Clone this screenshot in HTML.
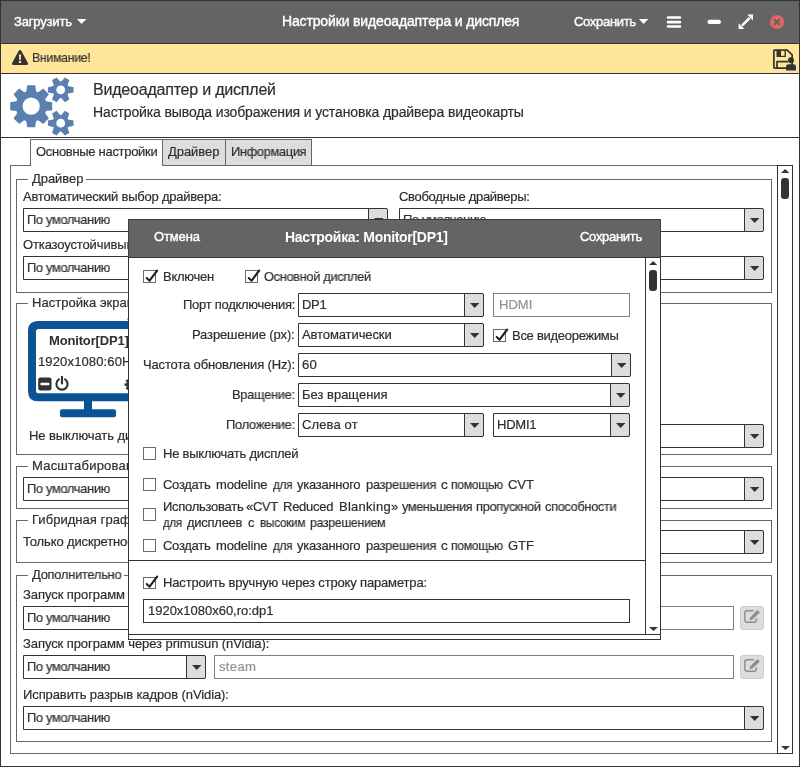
<!DOCTYPE html>
<html lang="ru"><head><meta charset="utf-8"><title>Настройки видеоадаптера и дисплея</title>
<style>
html,body{margin:0;padding:0;}
body{width:800px;height:767px;position:relative;overflow:hidden;background:#fff;font-family:"Liberation Sans", sans-serif;}
body>div,body>svg,body>span{position:absolute;display:block;}
span{will-change:transform;white-space:pre;line-height:20px;height:20px;transform-origin:0 50%;-webkit-text-stroke:0.2px;}
</style></head>
<body>
<div style="left:0px;top:0px;width:800px;height:767px;background:#fff;"></div>
<div style="left:0px;top:0px;width:800px;height:43px;background:#646464;"></div>
<div style="left:0px;top:43px;width:800px;height:1px;background:#333;"></div>
<div style="left:0px;top:44px;width:800px;height:29px;background:#ffe599;"></div>
<div style="left:0px;top:73px;width:800px;height:1px;background:#333;"></div>
<div style="left:0px;top:137px;width:800px;height:1px;background:#333;"></div>
<span style="left:14.1px;top:12px;font-size:13px;color:#fff;-webkit-text-stroke:0.4px;letter-spacing:-0.173px;">Загрузить</span>
<svg style="left:76.9px;top:19.1px;" width="9.2" height="5" viewBox="0 0 9.2 5"><path d="M0 0H9.2L4.6 5Z" fill="#fff"/></svg>
<span style="left:281.6px;top:11px;font-size:14px;color:#fff;-webkit-text-stroke:0.4px;letter-spacing:-0.148px;">Настройки видеоадаптера и дисплея</span>
<span style="left:573.7px;top:12px;font-size:13px;color:#fff;-webkit-text-stroke:0.4px;letter-spacing:-0.300px;transform:scaleX(0.9966);">Сохранить</span>
<svg style="left:639.0px;top:19.1px;" width="9.2" height="5" viewBox="0 0 9.2 5"><path d="M0 0H9.2L4.6 5Z" fill="#fff"/></svg>
<svg style="left:666px;top:14px;" width="16" height="16" viewBox="0 0 16 16"><g fill="#fff"><rect x="0.8" y="2.2" width="14.4" height="2.6" rx="1.2"/><rect x="0.8" y="6.8" width="14.4" height="2.6" rx="1.2"/><rect x="0.800" y="11.2" width="14.4" height="2.6" rx="1.2"/></g></svg>
<svg style="left:706px;top:18px;" width="16" height="8" viewBox="0 0 16 8"><rect x="1.5" y="1.7" width="13.5" height="4.300" rx="2.1" fill="#fff"/></svg>
<svg style="left:738px;top:14px;" width="16" height="16" viewBox="0 0 16 16"><g fill="#fff"><path d="M9.2 0.6H15V6.4Z"/><path d="M0.6 9.200V15H6.400Z"/></g><path d="M4 11.600L11.6 4" stroke="#fff" stroke-width="2.5"/></svg>
<svg style="left:769px;top:14px;" width="16" height="16" viewBox="0 0 16 16"><circle cx="8" cy="8" r="7.1" fill="#e06666"/><path d="M5.7 5.7L10.300 10.300M10.3 5.7L5.700 10.3" stroke="#646464" stroke-width="2.1" stroke-linecap="round"/></svg>
<svg style="left:11px;top:49px;" width="18" height="17" viewBox="0 0 18 17"><path d="M9 1Q9.9 1 10.4 1.9L16.9 13.9Q17.6 15.8 15.800 15.9H2.200Q0.4 15.8 1.1 13.900L7.6 1.9Q8.100 1 9 1Z" fill="#333"/><path d="M7.9 5.4H10.1L9.800 10.9H8.2Z" fill="#ffe599"/><rect x="7.9" y="11.9" width="2.2" height="2.1" fill="#ffe599"/></svg>
<span style="left:32.1px;top:48px;font-size:13px;color:#333;letter-spacing:-0.300px;transform:scaleX(0.9456);">Внимание!</span>
<svg style="left:772px;top:48px;" width="26" height="24" viewBox="0 0 26 24"><g fill="none" stroke="#333" stroke-width="1.7" stroke-linejoin="round">
<path d="M1.85 3.2Q1.85 2.15 2.9 2.15H15.200L20.15 6.9V19.1Q20.15 20.15 19.1 20.15H2.9Q1.85 20.15 1.85 19.1Z"/>
<path d="M5 20.15V13.700H16"/>
</g>
<path d="M4.5 2.15H13.9V9H4.500Z" fill="#333"/><rect x="9" y="2.9" width="3.5" height="4.9" fill="#ffe599"/>
<circle cx="19" cy="12.300" r="3" fill="#333"/>
<path d="M14 22.5V18.8Q14 16.3 16.500 16.3H21.500Q24 16.3 24 18.8V22.500Z" fill="#333"/></svg>
<svg style="left:0px;top:74px;" width="90" height="63" viewBox="0 74 90 63"><path d="M46.01 101.30L52.20 102.20L52.20 110.20L46.01 111.10A15.60 15.60 0 0 1 45.14 113.21L48.88 118.22L43.22 123.88L38.21 120.14A15.60 15.60 0 0 1 36.10 121.01L35.20 127.20L27.20 127.20L26.30 121.01A15.60 15.60 0 0 1 24.19 120.14L19.18 123.88L13.52 118.22L17.26 113.21A15.60 15.60 0 0 1 16.39 111.10L10.20 110.20L10.20 102.20L16.39 101.30A15.60 15.60 0 0 1 17.26 99.19L13.52 94.18L19.18 88.52L24.19 92.26A15.60 15.60 0 0 1 26.30 91.39L27.20 85.20L35.20 85.20L36.10 91.39A15.60 15.60 0 0 1 38.21 92.26L43.22 88.52L48.88 94.18L45.14 99.19A15.60 15.60 0 0 1 46.01 101.30ZM39.80 106.20A8.6 8.6 0 1 0 22.60 106.20A8.6 8.6 0 1 0 39.80 106.20ZM68.13 86.10L73.50 87.20L73.50 92.40L68.13 93.50A8.30 8.30 0 0 1 67.62 94.38L69.35 99.59L64.85 102.19L61.21 98.08A8.30 8.30 0 0 1 60.19 98.08L56.55 102.19L52.05 99.59L53.78 94.38A8.30 8.30 0 0 1 53.27 93.50L47.90 92.40L47.90 87.20L53.27 86.10A8.30 8.30 0 0 1 53.78 85.22L52.05 80.01L56.55 77.41L60.19 81.52A8.30 8.30 0 0 1 61.21 81.52L64.85 77.41L69.35 80.01L67.62 85.22A8.30 8.30 0 0 1 68.13 86.10ZM65.10 89.80A4.4 4.4 0 1 0 56.30 89.80A4.4 4.4 0 1 0 65.10 89.80ZM68.13 119.50L73.50 120.60L73.50 125.80L68.13 126.90A8.30 8.30 0 0 1 67.62 127.78L69.35 132.99L64.85 135.59L61.21 131.48A8.30 8.30 0 0 1 60.19 131.48L56.55 135.59L52.05 132.99L53.78 127.78A8.30 8.30 0 0 1 53.27 126.90L47.90 125.80L47.90 120.60L53.27 119.50A8.30 8.30 0 0 1 53.78 118.62L52.05 113.41L56.55 110.81L60.19 114.92A8.30 8.30 0 0 1 61.21 114.92L64.85 110.81L69.35 113.41L67.62 118.62A8.30 8.30 0 0 1 68.13 119.50ZM65.10 123.20A4.4 4.4 0 1 0 56.30 123.20A4.4 4.4 0 1 0 65.10 123.20Z" fill="#5b80b0" fill-rule="evenodd"/></svg>
<span style="left:93.1px;top:80px;font-size:16px;color:#2e2e2e;letter-spacing:-0.210px;">Видеоадаптер и дисплей</span>
<span style="left:93.1px;top:102px;font-size:14px;color:#2e2e2e;letter-spacing:-0.128px;">Настройка вывода изображения и установка драйвера видеокарты</span>
<div style="left:162px;top:139px;width:64px;height:27px;background:#ddd;border:1px solid #666;box-sizing:border-box;"></div>
<div style="left:225px;top:139px;width:87px;height:27px;background:#ddd;border:1px solid #666;box-sizing:border-box;"></div>
<div style="left:10px;top:165px;width:783px;height:589px;background:#fff;border:1px solid #666;box-sizing:border-box;"></div>
<div style="left:30px;top:139px;width:133px;height:27px;background:#fff;border:1px solid #666;box-sizing:border-box;border-bottom:none;"></div>
<span style="left:35.7px;top:142px;font-size:13px;color:#2e2e2e;letter-spacing:-0.300px;">Основные настройки</span>
<span style="left:168.1px;top:142px;font-size:13px;color:#2e2e2e;letter-spacing:-0.050px;">Драйвер</span>
<span style="left:230.6px;top:142px;font-size:13px;color:#2e2e2e;letter-spacing:-0.300px;transform:scaleX(0.9831);">Информация</span>
<div style="left:777px;top:165px;width:1px;height:589px;background:#333;"></div>
<div style="left:792px;top:165px;width:1px;height:589px;background:#333;"></div>
<div style="left:777px;top:165px;width:16px;height:1px;background:#333;"></div>
<div style="left:777px;top:753px;width:16px;height:1px;background:#333;"></div>
<svg style="left:780.8px;top:169.0px;" width="8.4" height="4" viewBox="0 0 8.4 4"><path d="M0 4H8.4L4.2 0Z" fill="#333"/></svg>
<div style="left:781px;top:178px;width:8px;height:21px;background:#333;border-radius:3.2px;"></div>
<svg style="left:780.5px;top:745.5px;" width="9" height="4" viewBox="0 0 9 4"><path d="M0 0H9L4.5 4Z" fill="#333"/></svg>
<div style="left:16px;top:179px;width:756px;height:114px;border:1px solid #666;box-sizing:border-box;"></div>
<div style="left:28px;top:177px;width:58px;height:5px;background:#fff;"></div>
<span style="left:31.6px;top:169px;font-size:13px;color:#2e2e2e;letter-spacing:-0.064px;">Драйвер</span>
<span style="left:22.6px;top:187px;font-size:13px;color:#2e2e2e;letter-spacing:-0.220px;">Автоматический выбор драйвера:</span>
<div style="left:23px;top:208px;width:365px;height:24px;background:#fff;border:1px solid #333;box-sizing:border-box;border-radius:0 2px 2px 0;"></div>
<div style="left:368px;top:208px;width:20px;height:24px;background:#ddd;border:1px solid #333;box-sizing:border-box;border-radius:0 2px 2px 0;"></div>
<svg style="left:373.7px;top:218.0px;" width="9.4" height="5" viewBox="0 0 9.4 5"><path d="M0 0H9.4L4.7 5Z" fill="#333"/></svg>
<span style="left:26.5px;top:210px;font-size:13px;color:#2e2e2e;letter-spacing:-0.300px;transform:scaleX(0.9855);">По умолчанию</span>
<span style="left:398.6px;top:187px;font-size:13px;color:#2e2e2e;letter-spacing:-0.300px;">Свободные драйверы:</span>
<div style="left:399px;top:208px;width:365px;height:24px;background:#fff;border:1px solid #333;box-sizing:border-box;border-radius:0 2px 2px 0;"></div>
<div style="left:744px;top:208px;width:20px;height:24px;background:#ddd;border:1px solid #333;box-sizing:border-box;border-radius:0 2px 2px 0;"></div>
<svg style="left:749.6999999999999px;top:218.0px;" width="9.4" height="5" viewBox="0 0 9.4 5"><path d="M0 0H9.4L4.7 5Z" fill="#333"/></svg>
<span style="left:402.5px;top:210px;font-size:13px;color:#2e2e2e;letter-spacing:-0.300px;transform:scaleX(0.9855);">По умолчанию</span>
<span style="left:22.6px;top:235px;font-size:13px;color:#2e2e2e;letter-spacing:-0.131px;">Отказоустойчивый выбор драйвера:</span>
<div style="left:23px;top:256px;width:365px;height:24px;background:#fff;border:1px solid #333;box-sizing:border-box;border-radius:0 2px 2px 0;"></div>
<div style="left:368px;top:256px;width:20px;height:24px;background:#ddd;border:1px solid #333;box-sizing:border-box;border-radius:0 2px 2px 0;"></div>
<svg style="left:373.7px;top:266.0px;" width="9.4" height="5" viewBox="0 0 9.4 5"><path d="M0 0H9.4L4.7 5Z" fill="#333"/></svg>
<span style="left:26.5px;top:258px;font-size:13px;color:#2e2e2e;letter-spacing:-0.300px;transform:scaleX(0.9855);">По умолчанию</span>
<div style="left:399px;top:256px;width:365px;height:24px;background:#fff;border:1px solid #333;box-sizing:border-box;border-radius:0 2px 2px 0;"></div>
<div style="left:744px;top:256px;width:20px;height:24px;background:#ddd;border:1px solid #333;box-sizing:border-box;border-radius:0 2px 2px 0;"></div>
<svg style="left:749.6999999999999px;top:266.0px;" width="9.4" height="5" viewBox="0 0 9.4 5"><path d="M0 0H9.4L4.7 5Z" fill="#333"/></svg>
<span style="left:402.5px;top:258px;font-size:13px;color:#2e2e2e;letter-spacing:-0.300px;transform:scaleX(0.9855);">По умолчанию</span>
<div style="left:16px;top:303px;width:756px;height:152px;border:1px solid #666;box-sizing:border-box;"></div>
<div style="left:28px;top:301px;width:116px;height:5px;background:#fff;"></div>
<span style="left:31.6px;top:293px;font-size:13px;color:#2e2e2e;letter-spacing:0.030px;">Настройка экрана</span>
<svg style="left:28px;top:320.8px;" width="121" height="97" viewBox="0 0 121 97"><path d="M10 0H110Q120 0 120 10V70.200Q120 80.2 110 80.2H10Q0 80.2 0 70.2V10Q0 0 10 0ZM10.5 8Q8 8 8 10.5V69.700Q8 72.2 10.5 72.2H109.5Q112 72.2 112 69.7V10.5Q112 8 109.500 8Z" fill="#0b5394" fill-rule="evenodd"/><rect x="56" y="79" width="8" height="10" fill="#0b5394"/><rect x="32" y="88.2" width="56" height="8" rx="2" fill="#0b5394"/></svg>
<span style="left:48.8px;top:331px;font-size:13px;color:#2e2e2e;font-weight:bold;-webkit-text-stroke:0;letter-spacing:-0.159px;">Monitor[DP1]</span>
<span style="left:37.6px;top:352px;font-size:13px;color:#2e2e2e;letter-spacing:0.142px;">1920x1080:60Hz</span>
<svg style="left:38px;top:377px;" width="14" height="14" viewBox="0 0 14 14"><rect x="0.2" y="0.4" width="13.3" height="13" rx="2.2" fill="#333"/><rect x="2.4" y="5.8" width="9" height="2.4" rx="0.6" fill="#fff"/></svg>
<svg style="left:54px;top:375px;" width="16" height="17" viewBox="0 0 16 17"><path d="M4.9 4.4A5.6 5.6 0 1 0 11.100 4.4" fill="none" stroke="#333" stroke-width="2.1" stroke-linecap="round"/><path d="M8 1.900V8.4" stroke="#333" stroke-width="2.1" stroke-linecap="round"/></svg>
<svg style="left:124px;top:378px;" width="14" height="14" viewBox="0 0 14 14"><path d="M11.28 5.20L13.30 5.50L13.30 7.70L11.28 8.00A4.60 4.60 0 0 1 10.99 8.71L12.20 10.35L10.65 11.90L9.01 10.69A4.60 4.60 0 0 1 8.30 10.98L8.00 13.00L5.80 13.00L5.50 10.98A4.60 4.60 0 0 1 4.79 10.69L3.15 11.90L1.60 10.35L2.81 8.71A4.60 4.60 0 0 1 2.52 8.00L0.50 7.70L0.50 5.50L2.52 5.20A4.60 4.60 0 0 1 2.81 4.49L1.60 2.85L3.15 1.30L4.79 2.51A4.60 4.60 0 0 1 5.50 2.22L5.80 0.20L8.00 0.20L8.30 2.22A4.60 4.60 0 0 1 9.01 2.51L10.65 1.30L12.20 2.85L10.99 4.49A4.60 4.60 0 0 1 11.28 5.20ZM8.90 6.60A2 2 0 1 0 4.90 6.60A2 2 0 1 0 8.90 6.60Z" fill="#333" fill-rule="evenodd"/></svg>
<div style="left:127px;top:318px;width:2px;height:2px;background:#f5a623;"></div>
<span style="left:28.9px;top:426px;font-size:13px;color:#2e2e2e;letter-spacing:-0.071px;">Не выключать дисплей:</span>
<div style="left:180px;top:424px;width:584px;height:24px;background:#fff;border:1px solid #333;box-sizing:border-box;border-radius:0 2px 2px 0;"></div>
<div style="left:744px;top:424px;width:20px;height:24px;background:#ddd;border:1px solid #333;box-sizing:border-box;border-radius:0 2px 2px 0;"></div>
<svg style="left:749.6999999999999px;top:434.0px;" width="9.4" height="5" viewBox="0 0 9.4 5"><path d="M0 0H9.4L4.7 5Z" fill="#333"/></svg>
<span style="left:183.5px;top:426px;font-size:13px;color:#2e2e2e;letter-spacing:-0.300px;transform:scaleX(0.9855);">По умолчанию</span>
<div style="left:16px;top:466px;width:756px;height:43px;border:1px solid #666;box-sizing:border-box;"></div>
<div style="left:28px;top:464px;width:123px;height:5px;background:#fff;"></div>
<span style="left:31.6px;top:456px;font-size:13px;color:#2e2e2e;letter-spacing:0.219px;">Масштабирование</span>
<div style="left:23px;top:477px;width:741px;height:24px;background:#fff;border:1px solid #333;box-sizing:border-box;border-radius:0 2px 2px 0;"></div>
<div style="left:744px;top:477px;width:20px;height:24px;background:#ddd;border:1px solid #333;box-sizing:border-box;border-radius:0 2px 2px 0;"></div>
<svg style="left:749.6999999999999px;top:487.0px;" width="9.4" height="5" viewBox="0 0 9.4 5"><path d="M0 0H9.4L4.7 5Z" fill="#333"/></svg>
<span style="left:26.5px;top:479px;font-size:13px;color:#2e2e2e;letter-spacing:-0.300px;transform:scaleX(0.9855);">По умолчанию</span>
<div style="left:16px;top:520px;width:756px;height:43px;border:1px solid #666;box-sizing:border-box;"></div>
<div style="left:28px;top:518px;width:126px;height:5px;background:#fff;"></div>
<span style="left:31.6px;top:510px;font-size:13px;color:#2e2e2e;letter-spacing:0.045px;">Гибридная графика</span>
<span style="left:22.6px;top:532px;font-size:13px;color:#2e2e2e;letter-spacing:-0.133px;">Только дискретное</span>
<div style="left:200px;top:530px;width:564px;height:24px;background:#fff;border:1px solid #333;box-sizing:border-box;border-radius:0 2px 2px 0;"></div>
<div style="left:744px;top:530px;width:20px;height:24px;background:#ddd;border:1px solid #333;box-sizing:border-box;border-radius:0 2px 2px 0;"></div>
<svg style="left:749.6999999999999px;top:540.0px;" width="9.4" height="5" viewBox="0 0 9.4 5"><path d="M0 0H9.4L4.7 5Z" fill="#333"/></svg>
<span style="left:203.5px;top:532px;font-size:13px;color:#2e2e2e;letter-spacing:-0.300px;transform:scaleX(0.9855);">По умолчанию</span>
<div style="left:16px;top:575px;width:756px;height:167px;border:1px solid #666;box-sizing:border-box;"></div>
<div style="left:28px;top:573px;width:96px;height:5px;background:#fff;"></div>
<span style="left:31.6px;top:565px;font-size:13px;color:#2e2e2e;letter-spacing:-0.300px;transform:scaleX(0.9958);">Дополнительно</span>
<span style="left:22.6px;top:585px;font-size:13px;color:#2e2e2e;letter-spacing:-0.063px;">Запуск программ через optirun (nVidia):</span>
<div style="left:23px;top:606px;width:183px;height:24px;background:#fff;border:1px solid #333;box-sizing:border-box;border-radius:0 2px 2px 0;"></div>
<div style="left:186px;top:606px;width:20px;height:24px;background:#ddd;border:1px solid #333;box-sizing:border-box;border-radius:0 2px 2px 0;"></div>
<svg style="left:191.70000000000002px;top:616.0px;" width="9.4" height="5" viewBox="0 0 9.4 5"><path d="M0 0H9.4L4.7 5Z" fill="#333"/></svg>
<span style="left:26.5px;top:608px;font-size:13px;color:#2e2e2e;letter-spacing:-0.300px;transform:scaleX(0.9855);">По умолчанию</span>
<div style="left:214px;top:606px;width:520px;height:24px;background:#fff;border:1px solid #7d7d8c;box-sizing:border-box;"></div>
<div style="left:740px;top:606px;width:24px;height:24px;background:#ddd;border:1px solid #ccc;box-sizing:border-box;border-radius:3px;"></div>
<span style="left:22.6px;top:634px;font-size:13px;color:#2e2e2e;letter-spacing:-0.079px;">Запуск программ через primusun (nVidia):</span>
<div style="left:23px;top:655px;width:183px;height:24px;background:#fff;border:1px solid #333;box-sizing:border-box;border-radius:0 2px 2px 0;"></div>
<div style="left:186px;top:655px;width:20px;height:24px;background:#ddd;border:1px solid #333;box-sizing:border-box;border-radius:0 2px 2px 0;"></div>
<svg style="left:191.70000000000002px;top:665.0px;" width="9.4" height="5" viewBox="0 0 9.4 5"><path d="M0 0H9.4L4.7 5Z" fill="#333"/></svg>
<span style="left:26.5px;top:657px;font-size:13px;color:#2e2e2e;letter-spacing:-0.300px;transform:scaleX(0.9855);">По умолчанию</span>
<div style="left:214px;top:655px;width:520px;height:24px;background:#fff;border:1px solid #7d7d8c;box-sizing:border-box;"></div>
<span style="left:219.1px;top:657px;font-size:13px;color:#90909a;letter-spacing:0.300px;transform:scaleX(1.0107);">steam</span>
<div style="left:740px;top:655px;width:24px;height:24px;background:#ddd;border:1px solid #ccc;box-sizing:border-box;border-radius:3px;"></div>
<svg style="left:743px;top:609px;" width="18" height="16" viewBox="0 0 18 16"><g fill="none" stroke="#8e8e8e" stroke-width="1.4" stroke-linecap="round" stroke-linejoin="round"><path d="M10.2 1.8H4.200Q1.8 1.8 1.8 4.2V10.8Q1.8 13.2 4.2 13.2H11Q13.4 13.2 13.4 10.800V9.6"/></g><path d="M7.2 8.200L14.4 1L16.8 3.4L9.6 10.600L6.6 11.200Z" fill="#8e8e8e"/><path d="M8.6 8.300L9.5 9.200" stroke="#ddd" stroke-width="0.8"/></svg>
<svg style="left:743px;top:658px;" width="18" height="16" viewBox="0 0 18 16"><g fill="none" stroke="#8e8e8e" stroke-width="1.4" stroke-linecap="round" stroke-linejoin="round"><path d="M10.2 1.8H4.200Q1.8 1.8 1.8 4.2V10.8Q1.8 13.2 4.2 13.2H11Q13.4 13.2 13.4 10.800V9.6"/></g><path d="M7.2 8.200L14.4 1L16.8 3.4L9.6 10.600L6.6 11.200Z" fill="#8e8e8e"/><path d="M8.6 8.300L9.5 9.200" stroke="#ddd" stroke-width="0.8"/></svg>
<span style="left:22.6px;top:685px;font-size:13px;color:#2e2e2e;letter-spacing:-0.102px;">Исправить разрыв кадров (nVidia):</span>
<div style="left:23px;top:706px;width:741px;height:24px;background:#fff;border:1px solid #333;box-sizing:border-box;border-radius:0 2px 2px 0;"></div>
<div style="left:744px;top:706px;width:20px;height:24px;background:#ddd;border:1px solid #333;box-sizing:border-box;border-radius:0 2px 2px 0;"></div>
<svg style="left:749.6999999999999px;top:716.0px;" width="9.4" height="5" viewBox="0 0 9.4 5"><path d="M0 0H9.4L4.7 5Z" fill="#333"/></svg>
<span style="left:26.5px;top:708px;font-size:13px;color:#2e2e2e;letter-spacing:-0.300px;transform:scaleX(0.9855);">По умолчанию</span>
<div style="left:128px;top:219px;width:533px;height:421px;background:#fff;border:1px solid #333;box-sizing:border-box;"></div>
<div style="left:128px;top:219px;width:533px;height:39px;background:#646464;border:1px solid #3c3c3c;box-sizing:border-box;"></div>
<div style="left:128px;top:257px;width:533px;height:1px;background:#333;"></div>
<span style="left:154.1px;top:227px;font-size:13px;color:#fff;-webkit-text-stroke:0.4px;letter-spacing:-0.143px;">Отмена</span>
<span style="left:284.6px;top:227px;font-size:14px;color:#fff;font-weight:bold;-webkit-text-stroke:0;letter-spacing:-0.300px;">Настройка: Monitor[DP1]</span>
<span style="left:579.9px;top:227px;font-size:13px;color:#fff;-webkit-text-stroke:0.4px;letter-spacing:-0.290px;">Сохранить</span>
<div style="left:645px;top:258px;width:1px;height:377px;background:#333;"></div>
<div style="left:129px;top:634px;width:532px;height:1px;background:#333;"></div>
<svg style="left:648.8px;top:261.0px;" width="8.4" height="4" viewBox="0 0 8.4 4"><path d="M0 4H8.4L4.2 0Z" fill="#333"/></svg>
<div style="left:649px;top:270px;width:8px;height:21px;background:#333;border-radius:3.2px;"></div>
<svg style="left:648.5px;top:627.0px;" width="9" height="4" viewBox="0 0 9 4"><path d="M0 0H9L4.5 4Z" fill="#333"/></svg>
<div style="left:143px;top:270px;width:13px;height:13px;background:#fff;border:1px solid #6a6a6a;box-sizing:border-box;"></div>
<svg style="left:143px;top:268.0px;" width="17" height="16" viewBox="0 0 17 16"><path d="M3.7 10L6.600 12.7L14.200 2.5" fill="none" stroke="#222" stroke-width="2.1" stroke-linecap="round" stroke-linejoin="round"/></svg>
<span style="left:163.0px;top:267px;font-size:13px;color:#2e2e2e;letter-spacing:-0.264px;">Включен</span>
<div style="left:245px;top:270px;width:13px;height:13px;background:#fff;border:1px solid #6a6a6a;box-sizing:border-box;"></div>
<svg style="left:245px;top:268.0px;" width="17" height="16" viewBox="0 0 17 16"><path d="M3.7 10L6.600 12.7L14.200 2.5" fill="none" stroke="#222" stroke-width="2.1" stroke-linecap="round" stroke-linejoin="round"/></svg>
<span style="left:263.6px;top:267px;font-size:13px;color:#2e2e2e;letter-spacing:-0.300px;transform:scaleX(0.9808);">Основной дисплей</span>
<span style="left:182.9px;top:295px;font-size:13px;color:#2e2e2e;letter-spacing:-0.273px;">Порт подключения:</span>
<div style="left:298px;top:293px;width:186px;height:24px;background:#fff;border:1px solid #333;box-sizing:border-box;border-radius:0 2px 2px 0;"></div>
<div style="left:464px;top:293px;width:20px;height:24px;background:#ddd;border:1px solid #333;box-sizing:border-box;border-radius:0 2px 2px 0;"></div>
<svg style="left:469.7px;top:303.0px;" width="9.4" height="5" viewBox="0 0 9.4 5"><path d="M0 0H9.4L4.7 5Z" fill="#333"/></svg>
<span style="left:301.5px;top:295px;font-size:13px;color:#2e2e2e;letter-spacing:-0.300px;transform:scaleX(0.9919);">DP1</span>
<div style="left:493px;top:293px;width:137px;height:24px;background:#fff;border:1px solid #7d7d8c;box-sizing:border-box;"></div>
<span style="left:498.6px;top:295px;font-size:13px;color:#90909a;letter-spacing:0.020px;">HDMI</span>
<span style="left:192.3px;top:325px;font-size:13px;color:#2e2e2e;letter-spacing:-0.130px;">Разрешение (px):</span>
<div style="left:298px;top:323px;width:186px;height:24px;background:#fff;border:1px solid #333;box-sizing:border-box;border-radius:0 2px 2px 0;"></div>
<div style="left:464px;top:323px;width:20px;height:24px;background:#ddd;border:1px solid #333;box-sizing:border-box;border-radius:0 2px 2px 0;"></div>
<svg style="left:469.7px;top:333.0px;" width="9.4" height="5" viewBox="0 0 9.4 5"><path d="M0 0H9.4L4.7 5Z" fill="#333"/></svg>
<span style="left:301.5px;top:325px;font-size:13px;color:#2e2e2e;letter-spacing:-0.099px;">Автоматически</span>
<div style="left:493px;top:329px;width:13px;height:13px;background:#fff;border:1px solid #6a6a6a;box-sizing:border-box;"></div>
<svg style="left:493px;top:327.0px;" width="17" height="16" viewBox="0 0 17 16"><path d="M3.7 10L6.600 12.7L14.200 2.5" fill="none" stroke="#222" stroke-width="2.1" stroke-linecap="round" stroke-linejoin="round"/></svg>
<span style="left:512.3px;top:326px;font-size:13px;color:#2e2e2e;letter-spacing:-0.279px;">Все видеорежимы</span>
<span style="left:142.9px;top:355px;font-size:13px;color:#2e2e2e;letter-spacing:-0.148px;">Частота обновления (Hz):</span>
<div style="left:298px;top:353px;width:333px;height:24px;background:#fff;border:1px solid #333;box-sizing:border-box;border-radius:0 2px 2px 0;"></div>
<div style="left:611px;top:353px;width:20px;height:24px;background:#ddd;border:1px solid #333;box-sizing:border-box;border-radius:0 2px 2px 0;"></div>
<svg style="left:616.6999999999999px;top:363.0px;" width="9.4" height="5" viewBox="0 0 9.4 5"><path d="M0 0H9.4L4.7 5Z" fill="#333"/></svg>
<span style="left:301.5px;top:355px;font-size:13px;color:#2e2e2e;letter-spacing:0.300px;transform:scaleX(1.0087);">60</span>
<span style="left:232.1px;top:385px;font-size:13px;color:#2e2e2e;letter-spacing:-0.300px;transform:scaleX(0.9889);">Вращение:</span>
<div style="left:298px;top:383px;width:332px;height:24px;background:#fff;border:1px solid #333;box-sizing:border-box;border-radius:0 2px 2px 0;"></div>
<div style="left:610px;top:383px;width:20px;height:24px;background:#ddd;border:1px solid #333;box-sizing:border-box;border-radius:0 2px 2px 0;"></div>
<svg style="left:615.6999999999999px;top:393.0px;" width="9.4" height="5" viewBox="0 0 9.4 5"><path d="M0 0H9.4L4.7 5Z" fill="#333"/></svg>
<span style="left:301.5px;top:385px;font-size:13px;color:#2e2e2e;letter-spacing:-0.007px;">Без вращения</span>
<span style="left:226.1px;top:415px;font-size:13px;color:#2e2e2e;letter-spacing:-0.300px;transform:scaleX(0.9926);">Положение:</span>
<div style="left:298px;top:413px;width:186px;height:24px;background:#fff;border:1px solid #333;box-sizing:border-box;border-radius:0 2px 2px 0;"></div>
<div style="left:464px;top:413px;width:20px;height:24px;background:#ddd;border:1px solid #333;box-sizing:border-box;border-radius:0 2px 2px 0;"></div>
<svg style="left:469.7px;top:423.0px;" width="9.4" height="5" viewBox="0 0 9.4 5"><path d="M0 0H9.4L4.7 5Z" fill="#333"/></svg>
<span style="left:301.5px;top:415px;font-size:13px;color:#2e2e2e;letter-spacing:0.135px;">Слева от</span>
<div style="left:493px;top:413px;width:137px;height:24px;background:#fff;border:1px solid #333;box-sizing:border-box;border-radius:0 2px 2px 0;"></div>
<div style="left:610px;top:413px;width:20px;height:24px;background:#ddd;border:1px solid #333;box-sizing:border-box;border-radius:0 2px 2px 0;"></div>
<svg style="left:615.6999999999999px;top:423.0px;" width="9.4" height="5" viewBox="0 0 9.4 5"><path d="M0 0H9.4L4.7 5Z" fill="#333"/></svg>
<span style="left:496.5px;top:415px;font-size:13px;color:#2e2e2e;letter-spacing:-0.211px;">HDMI1</span>
<div style="left:143px;top:447px;width:13px;height:13px;background:#fff;border:1px solid #6a6a6a;box-sizing:border-box;"></div>
<span style="left:163.0px;top:444px;font-size:13px;color:#2e2e2e;letter-spacing:-0.225px;">Не выключать дисплей</span>
<div style="left:143px;top:478px;width:13px;height:13px;background:#fff;border:1px solid #6a6a6a;box-sizing:border-box;"></div>
<span style="left:163.0px;top:475px;font-size:13px;color:#2e2e2e;letter-spacing:-0.287px;">Создать</span>
<span style="left:216.1px;top:475px;font-size:13px;color:#2e2e2e;letter-spacing:-0.183px;">modeline</span>
<span style="left:272.5px;top:475px;font-size:13px;color:#2e2e2e;letter-spacing:-0.300px;transform:scaleX(0.9100);">для</span>
<span style="left:297.1px;top:475px;font-size:13px;color:#2e2e2e;letter-spacing:-0.273px;">указанного</span>
<span style="left:366.1px;top:475px;font-size:13px;color:#2e2e2e;letter-spacing:-0.300px;transform:scaleX(0.9891);">разрешения</span>
<span style="left:440.6px;top:475px;font-size:13px;color:#2e2e2e;transform:scaleX(1.0462);">с</span>
<span style="left:450.8px;top:475px;font-size:13px;color:#2e2e2e;letter-spacing:-0.300px;transform:scaleX(0.9342);">помощью</span>
<span style="left:507.9px;top:475px;font-size:13px;color:#2e2e2e;letter-spacing:-0.067px;">CVT</span>
<div style="left:143px;top:508px;width:13px;height:13px;background:#fff;border:1px solid #6a6a6a;box-sizing:border-box;"></div>
<span style="left:163.0px;top:497px;font-size:13px;color:#2e2e2e;letter-spacing:-0.273px;">Использовать</span>
<span style="left:246.1px;top:497px;font-size:13px;color:#2e2e2e;letter-spacing:-0.300px;transform:scaleX(0.9927);">«CVT</span>
<span style="left:283.1px;top:497px;font-size:13px;color:#2e2e2e;letter-spacing:-0.250px;">Reduced</span>
<span style="left:339.1px;top:497px;font-size:13px;color:#2e2e2e;letter-spacing:0.266px;">Blanking»</span>
<span style="left:401.8px;top:497px;font-size:13px;color:#2e2e2e;letter-spacing:-0.300px;transform:scaleX(0.9694);">уменьшения</span>
<span style="left:476.4px;top:497px;font-size:13px;color:#2e2e2e;letter-spacing:-0.300px;transform:scaleX(0.9853);">пропускной</span>
<span style="left:544.6px;top:497px;font-size:13px;color:#2e2e2e;letter-spacing:-0.300px;transform:scaleX(0.9778);">способности</span>
<span style="left:163.0px;top:513px;font-size:13px;color:#2e2e2e;letter-spacing:-0.300px;transform:scaleX(0.8865);">для</span>
<span style="left:186.7px;top:513px;font-size:13px;color:#2e2e2e;letter-spacing:-0.268px;">дисплеев</span>
<span style="left:247.6px;top:513px;font-size:13px;color:#2e2e2e;transform:scaleX(0.9692);">с</span>
<span style="left:259.6px;top:513px;font-size:13px;color:#2e2e2e;letter-spacing:-0.300px;transform:scaleX(0.9075);">высоким</span>
<span style="left:310.1px;top:513px;font-size:13px;color:#2e2e2e;letter-spacing:-0.300px;transform:scaleX(0.9446);">разрешением</span>
<div style="left:143px;top:539px;width:13px;height:13px;background:#fff;border:1px solid #6a6a6a;box-sizing:border-box;"></div>
<span style="left:163.0px;top:536px;font-size:13px;color:#2e2e2e;letter-spacing:-0.287px;">Создать</span>
<span style="left:216.1px;top:536px;font-size:13px;color:#2e2e2e;letter-spacing:-0.183px;">modeline</span>
<span style="left:272.5px;top:536px;font-size:13px;color:#2e2e2e;letter-spacing:-0.300px;transform:scaleX(0.9100);">для</span>
<span style="left:297.1px;top:536px;font-size:13px;color:#2e2e2e;letter-spacing:-0.273px;">указанного</span>
<span style="left:366.1px;top:536px;font-size:13px;color:#2e2e2e;letter-spacing:-0.300px;transform:scaleX(0.9891);">разрешения</span>
<span style="left:440.6px;top:536px;font-size:13px;color:#2e2e2e;transform:scaleX(1.0462);">с</span>
<span style="left:450.8px;top:536px;font-size:13px;color:#2e2e2e;letter-spacing:-0.300px;transform:scaleX(0.9342);">помощью</span>
<span style="left:507.9px;top:536px;font-size:13px;color:#2e2e2e;letter-spacing:-0.067px;">GTF</span>
<div style="left:129px;top:560px;width:517px;height:1px;background:#333;"></div>
<div style="left:143px;top:577px;width:13px;height:12px;background:#fff;border:1px solid #6a6a6a;box-sizing:border-box;"></div>
<svg style="left:143px;top:574.4px;" width="17" height="16" viewBox="0 0 17 16"><path d="M3.7 10L6.600 12.7L14.200 2.5" fill="none" stroke="#222" stroke-width="2.1" stroke-linecap="round" stroke-linejoin="round"/></svg>
<span style="left:163.0px;top:573px;font-size:13px;color:#2e2e2e;letter-spacing:-0.162px;">Настроить вручную через строку параметра:</span>
<div style="left:143px;top:599px;width:487px;height:24px;background:#fff;border:1px solid #333;box-sizing:border-box;"></div>
<span style="left:147.9px;top:601px;font-size:13px;color:#2e2e2e;letter-spacing:-0.015px;">1920x1080x60,ro:dp1</span>
<div style="left:0px;top:0px;width:800px;height:767px;border:1px solid #333;box-sizing:border-box;pointer-events:none;"></div>
</body></html>
